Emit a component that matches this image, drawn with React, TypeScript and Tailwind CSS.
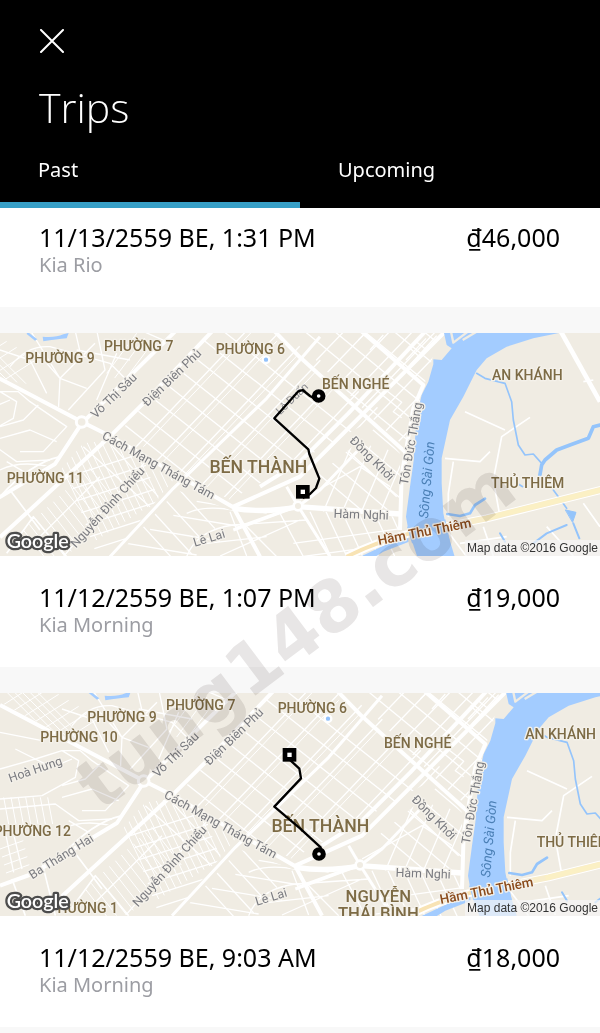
import { useState } from "react";

type Label = {
  text: string;
  x: number;
  y: number;
  rotate?: number;
  size?: number;
  kind: "area" | "street" | "water" | "tunnel";
  view?: "east" | "west";
};

/* Coordinates of the city map are in thirds of a pixel. */
const labels: Label[] = [
  { text: "PHƯỜNG 9", x: 180, y: 98, kind: "area" },
  { text: "PHƯỜNG 7", x: 416, y: 63, kind: "area" },
  { text: "PHƯỜNG 6", x: 751, y: 71, kind: "area" },
  { text: "PHƯỜNG 10", x: 51, y: 160, kind: "area", view: "west" },
  { text: "PHƯỜNG 11", x: 136, y: 459, kind: "area", view: "east" },
  { text: "PHƯỜNG 12", x: -89, y: 441, kind: "area", view: "west" },
  { text: "PHƯỜNG 1", x: 64, y: 671, kind: "area", view: "west" },
  { text: "BẾN NGHÉ", x: 1067, y: 176, kind: "area" },
  { text: "BẾN THÀNH", x: 775, y: 429, size: 53, kind: "area" },
  { text: "AN KHÁNH", x: 1582, y: 151, kind: "area", view: "east" },
  { text: "AN KHÁNH", x: 1496, y: 151, kind: "area", view: "west" },
  { text: "THỦ THIÊM", x: 1583, y: 475, kind: "area", view: "east" },
  { text: "THỦ THIÊM", x: 1534, y: 475, kind: "area", view: "west" },
  { text: "Võ Thị Sáu", x: 350, y: 206, rotate: -44, kind: "street" },
  { text: "Điện Biên Phủ", x: 524, y: 152, rotate: -44, kind: "street" },
  { text: "Cách Mạng Tháng Tám", x: 470, y: 417, rotate: 29, kind: "street" },
  { text: "Nguyễn Đình Chiểu", x: 332, y: 540, rotate: -48, kind: "street" },
  { text: "Lê Lai", x: 631, y: 636, rotate: -17, kind: "street" },
  { text: "Hoà Hưng", x: -76, y: 253, rotate: -19, kind: "street", view: "west" },
  { text: "Ba Tháng Hai", x: 4, y: 513, rotate: -32, kind: "street", view: "west" },
  { text: "Đồng Khởi", x: 1107, y: 394, rotate: 45, kind: "street" },
  { text: "Hàm Nghi", x: 1083, y: 566, rotate: 2, kind: "street" },
  { text: "Tôn Đức Thắng", x: 1245, y: 343, rotate: -80, kind: "street" },
  { text: "Sông Sài Gòn", x: 1294, y: 451, rotate: -85, size: 40, kind: "water" },
  { text: "Hầm Thủ Thiêm", x: 1276, y: 618, rotate: -11, size: 40, kind: "tunnel" },
];

const labelClass = {
  area: "fill-[#7d6b45] font-medium",
  street: "fill-[#7a7b80]",
  water: "fill-[#4a7fb5] italic",
  tunnel: "fill-[#8a4b1c] font-medium",
};

const labelSize = { area: 42, street: 37, water: 40, tunnel: 40 };

/* Builds a family of equally spaced parallel streets. */
function streets(x: number, y: number, dx: number, dy: number, stepX: number, stepY: number, count: number) {
  let d = "";
  for (let i = 0; i < count; i++) {
    d += `M${x + i * stepX} ${y + i * stepY}l${dx} ${dy}`;
  }
  return d;
}

function CityMap({ id, view }: { id: string; view: "east" | "west" }) {
  const clip = (name: string) => `url(#${id}-${name})`;
  return (
    <g fill="none" strokeLinejoin="round" fontFamily="Roboto, sans-serif">
      <defs>
        <clipPath id={`${id}-center`}>
          <path d="M345 320L640 0H860L1265 345L1080 290L690 510Z" />
        </clipPath>
        <clipPath id={`${id}-harbor`}>
          <path d="M860 0H1320L1290 110L1265 190L1235 350L1190 340Z" />
        </clipPath>
        <clipPath id={`${id}-south`}>
          <path d="M250 340L330 330L520 450L345 665L30 690L10 620Z" />
        </clipPath>
        <clipPath id={`${id}-market`}>
          <path d="M530 480L690 540H900L1195 560V690H340Z" />
        </clipPath>
        <clipPath id={`${id}-core`}>
          <path d="M900 480L1130 290L1200 370V545H900Z" />
        </clipPath>
        <clipPath id={`${id}-north`}>
          <path d="M-186 0H530L250 270L-186 40Z" />
        </clipPath>
        <clipPath id={`${id}-west`}>
          <path d="M-186 50L230 275L170 390L-186 580Z" />
        </clipPath>
      </defs>
      <rect x="-190" y="0" width="2000" height="700" fill="#f0ece3" />

      <g stroke="#ffffff" strokeWidth="4">
        <g clipPath={clip("center")}>
          <path d={streets(300, 300, 620, 490, 40, -42, 9)} />
          <path d={streets(385, 375, 390, -410, 62, 42, 7)} />
          <path strokeWidth="3" d={streets(430, 350, 340, -360, 60, 44, 5)} />
        </g>
        <g clipPath={clip("harbor")}>
          <path d={streets(820, 0, 470, 385, 55, -28, 9)} />
          <path d={streets(930, 110, 260, -270, 38, 32, 8)} />
          <path d="M1075 30l25 -25M1110 60l40 -45M1218 90l60 -65M1230 105l80 -88M1225 50l35 32M1245 32l35 28M1130 210l30 -28l45 35l-25 28l25 18" />
        </g>
        <g clipPath={clip("south")}>
          <path d={streets(170, 380, 120, 250, 17, -11, 15)} strokeWidth="3" />
          <path d={streets(70, 600, 90, 115, 18, -17, 12)} strokeWidth="3" />
          <path d={streets(205, 440, 220, -70, 13, 36, 7)} />
          <path d="M100 640L300 440M190 680L440 390M250 350L450 530M330 340L475 500" />
        </g>
        <g clipPath={clip("market")}>
          <path d={streets(430, 590, 110, 120, 35, -38, 4)} />
          <path d={streets(380, 640, 210, 35, 70, -42, 4)} />
          <path d="M560 680Q590 600 700 585L920 570M560 550Q610 525 700 540M690 545L740 678M730 580L830 680M840 550L910 680M620 640L800 620M660 678L900 570" />
          <path d={streets(930, 545, 65, 140, 48, 0, 6)} />
          <path d={streets(880, 640, 330, -45, 10, 42, 3)} />
        </g>
        <g clipPath={clip("core")}>
          <path d={streets(930, 410, 260, 220, 42, -32, 6)} />
          <path d={streets(970, 545, 90, -210, 52, 12, 5)} />
          <path d="M900 510L1080 410L1170 470M1020 340L1190 500" />
        </g>
        <g clipPath={clip("north")}>
          <path d={streets(-180, -5, 150, 150, 27, 4, 5)} strokeWidth="3" />
          <path d={streets(-180, 50, 110, -70, 30, 18, 7)} strokeWidth="3" />
          <path d="M30 110Q80 45 150 50L330 100L380 150M90 0L180 145L175 245M180 145L105 60M180 145L285 40M180 145L260 175M0 60L90 90L140 190M290 0L315 120L205 240M350 70L290 210M420 0L500 35M390 90L230 60M225 0L240 65" />
          <path d={streets(320, 130, 90, -120, 24, 14, 4)} strokeWidth="3" />
        </g>
        <g clipPath={clip("west")}>
          <path d="M-186 240L-80 210L0 185L50 215L40 265L-60 320L-186 330M0 185H55L90 215L200 290L130 365H60M0 290L70 270L115 225M0 325L90 300L170 335M-186 360L-20 345L50 395L150 390M-140 180L-30 235L30 210M-186 130L-60 155" />
          <path d={streets(-175, 325, 15, 80, 22, 0, 7)} strokeWidth="3" />
          <path d={streets(-186, 480, 70, -25, 6, 24, 5)} strokeWidth="3" />
          <path d="M-150 415L-120 540M-170 430L-145 550M20 395L80 430M0 420Q60 390 150 410" />
        </g>
        <path d="M0 500Q90 400 180 380M30 480L120 600M20 670L100 560L200 680M-60 520L-20 680M-150 570L-110 680M1395 245L1515 300M1590 262L1505 320L1480 450L1500 560M1335 385L1440 395L1470 365M1360 395L1345 490V560M1750 155L1780 150M1750 520L1800 590M1640 590L1720 678M1450 590L1480 678" strokeWidth="5" />
        <path d="M1340 600L1400 680M1380 640L1520 620" strokeWidth="5" />
      </g>

      <g stroke="#ffffff" strokeWidth="12">
        <path d="M-186 48L60 178L245 275L330 318L700 532L780 680" />
        <path d="M245 280L530 0" />
        <path d="M0 622L324 325L430 220L640 0" />
        <path d="M-186 590L-90 555L165 402L245 280" />
        <path d="M330 680L520 475L800 205L960 20" strokeWidth="9" />
        <path d="M780 470L900 395L1045 250L1280 0" />
        <path d="M700 530L900 440L1075 265L1340 0" />
        <path d="M720 590L900 525L960 480L1075 360" strokeWidth="9" />
        <path d="M820 0L900 82L1220 370L1210 430" />
        <path d="M1080 0L1270 165L1240 235L1205 435L1200 600" />
        <path d="M700 535Q800 550 894 530L1200 552" strokeWidth="16" />
        <path d="M894 528L990 680M894 528L700 600M894 528L860 470" strokeWidth="9" />
        <path d="M1680 0L1800 215" strokeWidth="14" />
        <circle cx="245" cy="276" r="16" fill="#f0ece3" strokeWidth="9" />
        <circle cx="894" cy="528" r="13" fill="#f0ece3" strokeWidth="8" />
      </g>

      <path fill="#a3ccff" d="M1330 0L1340 45L1355 55L1325 90L1300 88L1300 103L1295 120L1285 155L1265 195L1250 260L1240 400L1230 470L1218 560L1225 600L1255 690H1367L1340 600L1330 550L1325 460L1325 385L1350 270L1390 200L1430 120L1460 85L1520 50L1600 25L1720 0Z" />
      <path d="M1352 0L1360 38L1410 0M1388 30L1430 5L1450 0" stroke="#f0ece3" strokeWidth="7" />
      <path fill="#a3ccff" d="M1060 690L1170 638L1225 620V636L1150 665L1110 690Z" />
      <path fill="#a3ccff" d="M82 5L112 28L105 32L80 12ZM128 20Q165 24 190 13L206 9L200 25Q170 28 130 34Z" />
      <circle cx="798" cy="89" r="10" stroke="#ffffff" strokeWidth="7" fill="#93c2fb" />
      <g stroke="#94c4fb" strokeLinecap="round">
        <path d="M1430 130L1455 145L1515 160L1535 215L1540 270L1555 345L1575 375L1600 372L1625 400" strokeWidth="5" />
        <path d="M1800 285L1780 290L1765 325L1710 345L1670 360L1635 390L1625 405L1618 445" strokeWidth="11" />
        <path d="M1555 462L1568 470M1660 480L1675 500L1700 535" strokeWidth="5" />
        <path d="M1455 506L1425 525L1410 550L1380 558L1342 552" strokeWidth="8" />
        <path d="M1720 580L1738 625M1600 640L1640 610L1700 585M1500 610L1515 635" strokeWidth="6" />
        <path d="M1697 540L1728 547L1718 576Z" fill="#94c4fb" strokeWidth="3" />
      </g>

      <path d="M1040 680Q1130 635 1230 610L1460 565L1810 478" stroke="#ffffff" strokeWidth="24" />
      <path d="M1040 680Q1130 635 1230 610" stroke="#f8e3b4" strokeWidth="12" />
      <path d="M1230 610L1460 565L1810 478" stroke="#f8edcb" strokeWidth="18" />
      <path d="M1450 567L1810 478" stroke="#fbf0c4" strokeWidth="14" />
      <path fill="#a3ccff" d="M1221 590L1336 568L1350 636L1236 640Z" />

      <g textAnchor="middle">
        {labels
          .filter((label) => !label.view || label.view === view)
          .map((label) => (
            <text
              key={label.text}
              x={label.x}
              y={label.y}
              fontSize={label.size ?? labelSize[label.kind]}
              transform={label.rotate ? `rotate(${label.rotate} ${label.x} ${label.y})` : undefined}
              stroke={label.kind === "water" ? "none" : "#f4f1ea"}
              strokeWidth="8"
              paintOrder="stroke"
              className={labelClass[label.kind]}
            >
              {label.text}
            </text>
          ))}
      </g>
    </g>
  );
}

function RouteToSquare() {
  return (
    <g>
      <text x="884" y="214" fontSize="33" textAnchor="middle" transform="rotate(-44 884 214)" fontFamily="Roboto, sans-serif" className="fill-[#8a8b90]">
        Lê Duẩn
      </text>
      <path d="M958 214L930 198L908 180L895 184L823 265L925 358L928 372L958 446L948 474L930 492L908 504" fill="none" stroke="#000" strokeWidth="7" strokeLinejoin="round" />
      <circle cx="956" cy="198" r="13" fill="#fff" stroke="#000" strokeWidth="15" />
      <rect x="895" y="472" width="27" height="27" fill="#fff" stroke="#000" strokeWidth="14" />
    </g>
  );
}

function RouteToCircle() {
  return (
    <g>
      <g textAnchor="middle" fontSize="50" fontFamily="Roboto, sans-serif" stroke="#f4f1ea" strokeWidth="8" paintOrder="stroke" className="fill-[#7d6b45] font-medium">
        <text x="1135" y="635">NGUYỄN</text>
        <text x="1135" y="687">THÁI BÌNH</text>
      </g>
      <path d="M868 208L898 236L903 265L823 350L900 415L962 472L957 490" fill="none" stroke="#000" strokeWidth="7" strokeLinejoin="round" />
      <rect x="855" y="181" width="27" height="27" fill="#fff" stroke="#000" strokeWidth="14" />
      <circle cx="957" cy="492" r="13" fill="#fff" stroke="#000" strokeWidth="15" />
    </g>
  );
}

function TripMap({ id, view }: { id: string; view: "east" | "west" }) {
  return (
    <div className="relative">
      <svg viewBox="0 9 1800 669" role="img" aria-label="Route map" className="block w-full">
        <g transform={view === "west" ? "translate(186 -3)" : undefined}>
          <CityMap id={id} view={view} />
        </g>
        {view === "west" ? <RouteToCircle /> : <RouteToSquare />}
        <text x="20" y="654" fontSize="59" fontFamily="Lato, sans-serif" fill="#fff" stroke="#4c4c4c" strokeWidth="14" strokeLinejoin="round" paintOrder="stroke" className="font-semibold">
          Google
        </text>
      </svg>
      <p className="absolute right-0 bottom-0 bg-[#f5f5f5]/70 px-0.5 font-['Liberation_Sans',sans-serif] text-[12px] leading-4 text-[#333]">
        Map data ©2016 Google
      </p>
    </div>
  );
}

type Trip = { date: string; fare: string; car: string };

function TripSummary({ trip, first }: { trip: Trip; first?: boolean }) {
  return (
    <div className={`bg-white pr-10 pb-[30px] pl-[39px] ${first ? "pt-[13px]" : "pt-[25px]"}`}>
      <div className="flex justify-between text-[25px] leading-8 text-black">
        <h2>{trip.date}</h2>
        <p>{trip.fare}</p>
      </div>
      <p className="text-[20px] leading-6 text-[#9c9da3]">{trip.car}</p>
    </div>
  );
}

const trips: Trip[] = [
  { date: "11/13/2559 BE, 1:31 PM", fare: "₫46,000", car: "Kia Rio" },
  { date: "11/12/2559 BE, 1:07 PM", fare: "₫19,000", car: "Kia Morning" },
  { date: "11/12/2559 BE, 9:03 AM", fare: "₫18,000", car: "Kia Morning" },
];

export default function App() {
  const [tab, setTab] = useState("Past");
  return (
    <div className="relative min-h-screen overflow-hidden bg-[#f8f8f8] font-['Noto_Sans','Open_Sans',sans-serif]">
      <header className="bg-black text-white">
        <div className="px-[39px] pt-[29px]">
          <button type="button" aria-label="Close" className="block">
            <svg viewBox="0 0 26 24" className="block h-6 w-[26px]" fill="none" stroke="currentColor" strokeWidth="2" strokeLinecap="round">
              <path d="M2 1L24 23M24 1L2 23" />
            </svg>
          </button>
          <h1 className="mt-[26px] font-['Open_Sans','Noto_Sans',sans-serif] text-[41px] leading-[56px] font-light">Trips</h1>
        </div>
        <nav className="flex" aria-label="Trip lists">
          {["Past", "Upcoming"].map((name) => (
            <button
              key={name}
              type="button"
              aria-pressed={tab === name}
              onClick={() => setTab(name)}
              className={`flex-1 border-b-6 px-[38px] pt-[21px] pb-[18px] text-left text-[20px] leading-7 ${tab === name ? "border-[#379fc6]" : "border-black"}`}
            >
              {name}
            </button>
          ))}
        </nav>
      </header>

      <main className="flex flex-col gap-[26px]">
        <article>
          <TripSummary trip={trips[0]} first />
        </article>
        <article>
          <TripMap id="ben-nghe" view="east" />
          <TripSummary trip={trips[1]} />
        </article>
        <article>
          <TripMap id="ben-thanh" view="west" />
          <TripSummary trip={trips[2]} />
        </article>
      </main>

      <div aria-hidden="true" className="pointer-events-none absolute inset-x-0 top-[590px] flex justify-center pr-2 mix-blend-multiply">
        <span className="-rotate-[37deg] font-['DejaVu_Sans',sans-serif] text-[71px] leading-[90px] font-bold text-[#e8e6e6]">tung148.com</span>
      </div>
    </div>
  );
}
